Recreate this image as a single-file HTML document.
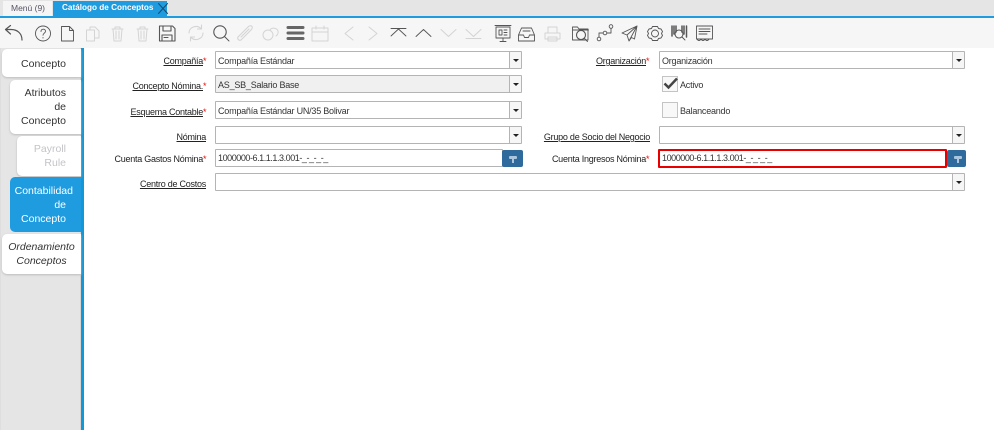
<!DOCTYPE html>
<html><head><meta charset="utf-8"><style>
html,body{margin:0;padding:0}
body{width:994px;height:430px;position:relative;overflow:hidden;background:#fff;font-family:"Liberation Sans",sans-serif;font-size:9px;letter-spacing:-.22px;color:#333}
div{position:absolute;box-sizing:border-box}
.t{white-space:nowrap}
.l{text-align:right;text-decoration:underline;color:#222;white-space:nowrap;height:12px;line-height:12px;letter-spacing:-.25px}
.l b{color:#e01010;font-weight:normal;text-decoration:none;display:inline-block;width:4px;text-align:left}
.f{border:1px solid #b4b4b4;background:#fff;height:18px;line-height:18px;padding-left:2px;border-radius:1px;white-space:nowrap}
.v{letter-spacing:-.44px}
.sb{border-left:1px solid #b4b4b4;position:absolute;right:0;top:0;bottom:0;width:12px;background:#f6f6f6}
.sb:after{content:"";position:absolute;left:3px;top:7px;border:3px solid transparent;border-top:3px solid #222;border-bottom:0}
.tab{background:#fff;border-radius:5px 0 0 5px;text-align:right;font-size:10.5px;letter-spacing:0;line-height:14px;color:#333;box-shadow:0 1px 2px #bbb}
.btn{background:#2f6a9c;border-radius:2px}
.btn:after{content:"";position:absolute;left:7px;top:6px;width:8px;height:3px;background:#a9c6de;border-radius:1px}
.btn:before{content:"";position:absolute;left:10px;top:6px;width:2px;height:7px;background:#a9c6de}
svg{position:absolute;left:0;top:0}
.cb{border:1px solid #c4c4c4;background:#f8f8f8;width:16px;height:16px;left:662px}
</style></head><body>
<div style="left:0;top:0;width:994px;height:16px;background:#e5e5e5"></div>
<div style="left:3px;top:1px;width:49px;height:15px;background:#f5f5f5"></div>
<div class="t" style="left:11px;top:2px;line-height:12px;font-size:8.5px;letter-spacing:0;color:#556">Menú (9)</div>
<div style="left:53px;top:1px;width:114px;height:16px;background:#1f9be0"></div>
<div class="t" style="left:62px;top:2px;line-height:12px;font-size:8.2px;letter-spacing:0;color:#fff;font-weight:bold">Catálogo de Conceptos</div>
<div style="left:0;top:16px;width:994px;height:2px;background:#1f9be0"></div>
<div style="left:0;top:18px;width:994px;height:30px;background:#f6f6f6"></div>
<div style="left:0;top:48px;width:81px;height:382px;background:#e5e5e5;border-left:1px solid #dedede;border-right:1px solid #d4d4d4"></div>
<div style="left:81px;top:48px;width:3px;height:382px;background:#1297d8"></div>

<svg width="994" height="50" fill="none" stroke-linecap="round" stroke-linejoin="round">
<path d="M158.500 3.500l9 10M167.500 3.500l-9 10" stroke="#1b4a6b" stroke-width="1"/>
<g stroke="#555" stroke-width=".9">
<path d="M22 40c0-6-4-10.500-11-10.500H6M10.500 25.500l-5 4 5 4.500" stroke-width="1.200"/>
<circle cx="43" cy="33.500" r="7.500"/><path d="M41 31.500c0-3 4.500-3 4.500-.3 0 2-2.500 2-2.500 4M43 37.500v.5"/>
<path d="M61.500 26.500h8l4 4v10.500h-12zM69.500 26.500v4h4"/>
<path d="M159.500 26h13l2.500 2.500v12.500h-15.500zM163 26v5h8v-5M162 41v-6h10v6M164 37.500h4" stroke-width="1.100"/>
<circle cx="220" cy="32" r="6.200" stroke-width="1.100"/><path d="M224.500 36.500l4.500 4.500"/>
<path d="M288 27.500h15M288 33h15M288 38.500h15" stroke="#666" stroke-width="3"/>
<path d="M391 28.500h15M391 36l7.500-7 7.500 7M416 36.500l7.500-7 7.500 7"/>
<path d="M496 27h14v11h-14zM495 25.500h16M503 38v3M500 41.500h6M499 30h3v5h-3zM504 30h3M504 32.500h3M504 35h3"/>
<path d="M518.500 35l3-7h10l3 7v6h-16zM518.500 35h5l1 2.500h4l1-2.500h5M523 31h7"/>
<path d="M572.500 40V27h5l1.500 2h9v11zM572.500 30h16"/><circle cx="581" cy="35" r="4.500" stroke-width="1.100"/><path d="M584.500 38.500l3 3"/>
<circle cx="599" cy="39" r="1.800"/><circle cx="611" cy="26.500" r="1.800"/><circle cx="605" cy="33" r="1.800"/><path d="M599 37v-4h4M607 33h4v-4.500"/>
<path d="M637 26l-15 7 5 2 2 6 2.500-3.500 3 1.500zM637 26l-10 9M637 26l-8 15"/>
<path d="M652.500 26.500h5l1 2 2.500.5 1.500 2.500-1 2 1 2-1.500 2.500-2.500.5-1 2h-5l-1-2-2.500-.5-1.500-2.500 1-2-1-2 1.500-2.500 2.500-.5z"/><circle cx="655" cy="33.500" r="3.500"/>
<path d="M672 26v10M674 26v8M676 26v6M682 26v6M684 26v8M686.500 26v11" stroke-width="1.500"/><circle cx="679" cy="34" r="4" stroke-width="1.100"/><path d="M682 37l3 3"/>
<path d="M696.500 26h16v13h-16zM699 29h11M699 31.500h11M699 34h8"/><path d="M697 39c1 2 3 2 4 0 1 2 3 2 4 0 1 2 3 2 4 0"/>
</g>
<g stroke="#d4d4d4" stroke-width="1">
<path d="M86.500 30h8v11h-8zM90 30v-3h5l4 4v7h-4.500"/>
<path d="M112 29h11M115 29v-2h5v2M113 29l1 12h7l1-12M116 31v8M119 31v8"/>
<path d="M137 29h11M140 29v-2h5v2M138 29l1 12h7l1-12M141 31v8M144 31v8"/>
<path d="M189 33c0-6 8-9 12.500-4M203 33c0 6-8 9-12.500 4M201.500 25v4h-4M190.500 41v-4h4" stroke-width="1.100"/>
<path d="M238 37l10-10c3-3 6 0 3 3l-10 10c-2 1-4-1-3-3zM241 37l8-8" stroke-width="1.100"/>
<circle cx="268" cy="35" r="5"/><path d="M270 30c2-3 7-2 8 1 .5 2-.5 4-2 5"/>
<path d="M312 28h16v13h-16zM312 32h16M316 26v3M324 26v3"/>
<path d="M353 27l-8 6.500 8 6.500M369 27l8 6.500-8 6.500"/>
<path d="M441 29.500l7.500 7 7.500-7M466 29.500l7.500 7 7.500-7M466 38.500h15"/>
<path d="M545 33h15v6h-15zM548 33v-6h9v6M548 37h9v4h-9z"/>
</g>
</svg>

<div class="tab" style="left:2px;top:49px;width:79px;height:28px;line-height:30px;padding-right:15px">Concepto</div>
<div class="tab" style="left:10px;top:80px;width:71px;height:54px;padding:6px 15px 0 0">Atributos<br>de<br>Concepto</div>
<div class="tab" style="left:17px;top:136px;width:64px;height:40px;padding:6px 15px 0 0;color:#c4c4c8">Payroll<br>Rule</div>
<div class="tab" style="left:10px;top:177px;width:71px;height:55px;padding:7px 8px 0 0;background:#1f9be0;color:#fff;box-shadow:none">Contabilidad<br><span style="padding-right:7px">de</span><br><span style="padding-right:7px">Concepto</span></div>
<div class="tab" style="left:2px;top:234px;width:79px;height:40px;text-align:center;font-style:italic;padding:6px 0 0 0">Ordenamiento<br>Conceptos</div>

<div class="l" style="left:100px;width:107px;top:55px">Compañía<b>*</b></div>
<div class="l" style="left:100px;width:107px;top:80px">Concepto Nómina.<b>*</b></div>
<div class="l" style="left:100px;width:107px;top:106px">Esquema Contable<b>*</b></div>
<div class="l" style="left:100px;width:106px;top:131px">Nómina</div>
<div class="l" style="left:90px;width:117px;top:153px;text-decoration:none">Cuenta Gastos Nómina<b>*</b></div>
<div class="l" style="left:100px;width:106px;top:178px">Centro de Costos</div>

<div class="l" style="left:540px;width:110px;top:55px">Organización<b>*</b></div>
<div class="l" style="left:510px;width:140px;top:131px">Grupo de Socio del Negocio</div>
<div class="l" style="left:520px;width:130px;top:153px;text-decoration:none">Cuenta Ingresos Nómina<b>*</b></div>

<div class="f" style="left:215px;top:51px;width:307px">Compañía Estándar<div class="sb"></div></div>
<div class="f" style="left:215px;top:75px;width:307px;background:#f0f0f0">AS_SB_Salario Base<div class="sb"></div></div>
<div class="f" style="left:215px;top:101px;width:307px">Compañía Estándar UN/35 Bolivar<div class="sb"></div></div>
<div class="f" style="left:215px;top:126px;width:307px"><div class="sb"></div></div>
<div class="f v" style="left:215px;top:149px;width:288px;line-height:17px">1000000-6.1.1.1.3.001-_-_-_-_</div>
<div class="btn" style="left:502px;top:150px;width:21px;height:17px"></div>
<div class="f" style="left:215px;top:173px;width:750px"><div class="sb"></div></div>

<div class="f" style="left:659px;top:51px;width:306px">Organización<div class="sb"></div></div>
<div class="cb" style="top:76px"></div>
<svg width="994" height="100" style="top:0"><path d="M664.500 83.500l4 4 8.500-9" fill="none" stroke="#444" stroke-width="2.500"/></svg>
<div class="t" style="left:680px;top:79px;line-height:12px">Activo</div>
<div class="cb" style="top:102px"></div>
<div class="t" style="left:680px;top:105px;line-height:12px">Balanceando</div>
<div class="f" style="left:659px;top:126px;width:306px"><div class="sb"></div></div>
<div class="f v" style="left:658px;top:149px;width:289px;height:19px;border:2px solid #e60000;line-height:15px;padding-left:2px">1000000-6.1.1.1.3.001-_-_-_-_</div>
<div class="btn" style="left:947px;top:150px;width:19px;height:17px"></div>
</body></html>
